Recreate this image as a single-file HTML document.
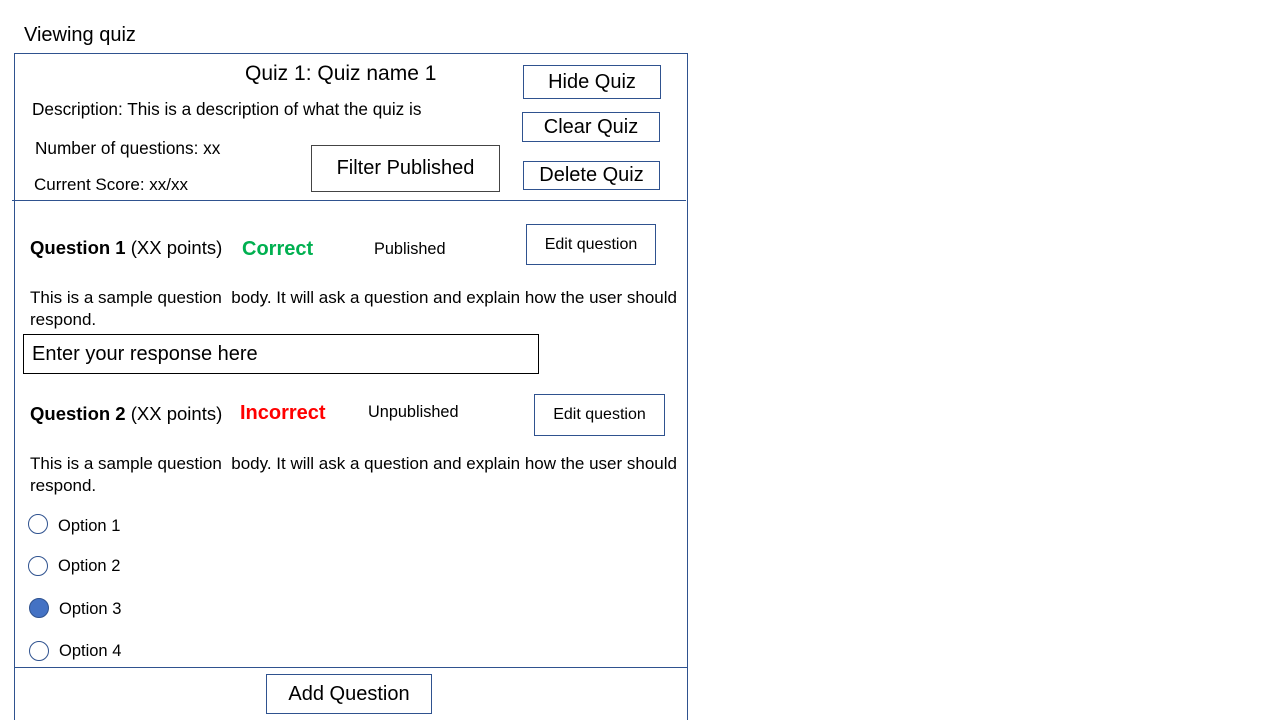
<!DOCTYPE html>
<html><head><meta charset="utf-8"><style>
html,body{margin:0;width:1280px;height:720px;overflow:hidden}
body{background:#fff;position:relative;font-family:"Liberation Sans",sans-serif;color:#000}
.a{position:absolute;white-space:nowrap}
.b{position:absolute;border:1px solid #2f528f;box-sizing:border-box;display:flex;align-items:center;justify-content:center;white-space:nowrap}
.c{position:absolute;width:20px;height:20px;border:1px solid #2f528f;border-radius:50%;box-sizing:border-box}
</style></head><body>
<div class="a" style="left:24px;top:24px;font-size:20px">Viewing quiz</div>
<div style="position:absolute;left:14px;top:53px;width:674px;height:667px;border:1px solid #2f528f;border-bottom:none;box-sizing:border-box"></div>
<div style="position:absolute;left:12px;top:200px;width:674px;height:1px;background:#2f528f"></div>
<div style="position:absolute;left:14px;top:667px;width:674px;height:1px;background:#2f528f"></div>
<div class="a" style="left:245px;top:62px;font-size:21px">Quiz 1: Quiz name 1</div>
<div class="b" style="left:523px;top:65px;width:138px;height:34px;font-size:20px">Hide Quiz</div>
<div class="b" style="left:522px;top:112px;width:138px;height:30px;font-size:20px">Clear Quiz</div>
<div class="b" style="left:523px;top:161px;width:137px;height:29px;font-size:20px">Delete Quiz</div>
<div class="b" style="left:311px;top:145px;width:189px;height:47px;font-size:20px;border-color:#444">Filter Published</div>
<div class="a" style="left:32px;top:99px;font-size:17.2px">Description: This is a description of what the quiz is</div>
<div class="a" style="left:35px;top:138px;font-size:17.2px">Number of questions: xx</div>
<div class="a" style="left:34px;top:175px;font-size:17px">Current Score: xx/xx</div>

<div class="a" style="left:30px;top:237px;font-size:18.5px"><b>Question 1</b> (XX points)</div>
<div class="a" style="left:242px;top:238px;font-size:20px;font-weight:bold;color:#00b050">Correct</div>
<div class="a" style="left:374px;top:240px;font-size:16.3px">Published</div>
<div class="b" style="left:526px;top:224px;width:130px;height:41px;font-size:16px">Edit question</div>
<div class="a" style="left:30px;top:287px;font-size:17px;line-height:22px">This is a sample question&nbsp; body. It will ask a question and explain how the user should<br>respond.</div>
<div style="position:absolute;left:23px;top:334px;width:516px;height:40px;border:1px solid #000;box-sizing:border-box"></div>
<div class="a" style="left:32px;top:343px;font-size:20px">Enter your response here</div>

<div class="a" style="left:30px;top:403px;font-size:18.5px"><b>Question 2</b> (XX points)</div>
<div class="a" style="left:240px;top:402px;font-size:20px;font-weight:bold;color:#ff0000">Incorrect</div>
<div class="a" style="left:368px;top:403px;font-size:16.3px">Unpublished</div>
<div class="b" style="left:534px;top:394px;width:131px;height:42px;font-size:16px">Edit question</div>
<div class="a" style="left:30px;top:453px;font-size:17px;line-height:22px">This is a sample question&nbsp; body. It will ask a question and explain how the user should<br>respond.</div>

<div class="c" style="left:28px;top:514px"></div><div class="a" style="left:58px;top:517px;font-size:16.5px">Option 1</div>
<div class="c" style="left:28px;top:556px"></div><div class="a" style="left:58px;top:557px;font-size:16.5px">Option 2</div>
<div class="c" style="left:29px;top:598px;background:#4472c4"></div><div class="a" style="left:59px;top:600px;font-size:16.5px">Option 3</div>
<div class="c" style="left:29px;top:641px"></div><div class="a" style="left:59px;top:642px;font-size:16.5px">Option 4</div>

<div class="b" style="left:266px;top:674px;width:166px;height:40px;font-size:20px">Add Question</div>
</body></html>
